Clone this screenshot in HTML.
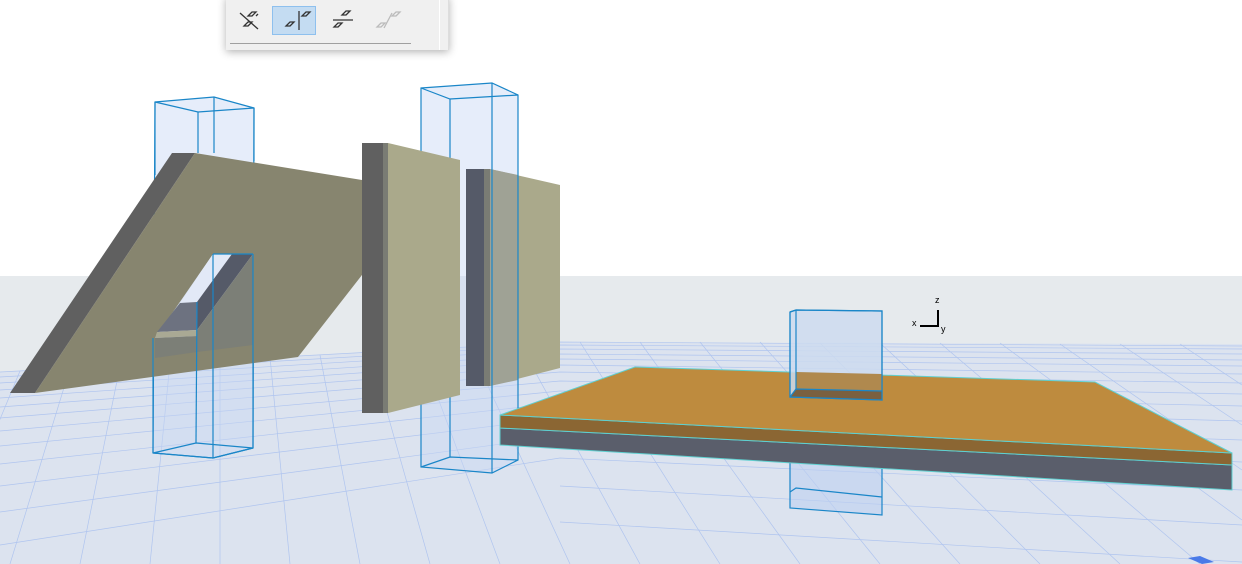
<!DOCTYPE html>
<html><head><style>
html,body{margin:0;padding:0;width:1242px;height:564px;overflow:hidden;background:#fff;font-family:"Liberation Sans",sans-serif}
</style></head><body>
<svg width="1242" height="564" viewBox="0 0 1242 564" xmlns="http://www.w3.org/2000/svg" style="position:absolute;left:0;top:0">
<rect x="0" y="0" width="1242" height="276" fill="#ffffff"/>
<rect x="0" y="276" width="1242" height="288" fill="#e6eaed"/>
<polygon points="0,372 560,342 1242,344 1242,564 0,564" fill="#dce3ef"/>
<g stroke="#9db8ef" stroke-width="0.7" fill="none" opacity="0.7">
<polyline points="0,372 560,342 1242,346"/>
<polyline points="0,377 560,345 1242,349"/>
<polyline points="0,383 560,349 1242,354"/>
<polyline points="0,390 560,354 1242,360"/>
<polyline points="0,398 560,359 1242,366"/>
<polyline points="0,407 560,365 1242,374"/>
<polyline points="0,418 560,372 1242,383"/>
<polyline points="0,431 560,381 1242,394"/>
<polyline points="0,446 560,391 1242,406"/>
<polyline points="0,464 560,403 1242,421"/>
<polyline points="0,486 560,418 1242,440"/>
<polyline points="0,512 560,436 1242,462"/>
<polyline points="0,545 560,458 1242,490"/>
<polyline points="560,486 1242,525"/>
<polyline points="560,522 1242,562"/>
<line x1="20" y1="371" x2="-60" y2="564"/>
<line x1="70" y1="368" x2="10" y2="564"/>
<line x1="120" y1="366" x2="80" y2="564"/>
<line x1="170" y1="363" x2="150" y2="564"/>
<line x1="220" y1="360" x2="220" y2="564"/>
<line x1="270" y1="357" x2="290" y2="564"/>
<line x1="320" y1="355" x2="360" y2="564"/>
<line x1="370" y1="352" x2="430" y2="564"/>
<line x1="420" y1="350" x2="500" y2="564"/>
<line x1="470" y1="347" x2="570" y2="564"/>
<line x1="520" y1="344" x2="640" y2="564"/>
<line x1="580" y1="342" x2="720" y2="564"/>
<line x1="640" y1="342" x2="800" y2="564"/>
<line x1="700" y1="342" x2="880" y2="564"/>
<line x1="760" y1="342" x2="960" y2="564"/>
<line x1="820" y1="343" x2="1040" y2="564"/>
<line x1="880" y1="343" x2="1120" y2="564"/>
<line x1="940" y1="343" x2="1200" y2="564"/>
<line x1="1000" y1="343" x2="1242" y2="520"/>
<line x1="1060" y1="344" x2="1242" y2="470"/>
<line x1="1120" y1="344" x2="1242" y2="425"/>
<line x1="1180" y1="344" x2="1242" y2="385"/>
</g>
<!-- column 1 back -->
<g stroke="#1a86c8" stroke-width="1.2" fill="rgba(200,215,245,0.45)">
<polygon points="155,102 214,97 254,108 253,448 213,458 153,453"/>
</g>
<!-- sloped wall -->
<polygon points="10,393 35,393 195,153 172,153" fill="#606060"/>
<path d="M35,393 L195,153 L362,180 L362,275 L298,357 Z M155,338 L213,254 L253,254 L253,345 Z" fill="#87856f" fill-rule="evenodd"/>
<polygon points="180,303 213,254 232,254 197,302" fill="#e2e9f7"/>
<polygon points="197,302 232,254 253,254 197,330" fill="#555a68"/>
<polygon points="180,303 197,302 197,330 157,332" fill="#6d7280"/>
<polygon points="157,332 197,330 197,336 155,338" fill="#a9a994"/>
<polygon points="197,336 197,330 253,254 253,345 197,352" fill="#7c7f77"/>
<polygon points="155,338 197,336 197,352 155,358" fill="#7c7f77"/>
<g stroke="#1a86c8" stroke-width="1.2" fill="none">
<polyline points="155,102 198,112 254,108"/>
<line x1="155" y1="102" x2="155" y2="175"/>
<line x1="198" y1="112" x2="198" y2="153"/>
<line x1="214" y1="97" x2="214" y2="153"/>
<line x1="254" y1="108" x2="254" y2="161"/>
<line x1="153" y1="338" x2="153" y2="453"/><line x1="197" y1="302" x2="196" y2="443"/><line x1="213" y1="254" x2="213" y2="458"/><line x1="253" y1="254" x2="253" y2="448"/>
<line x1="213" y1="254" x2="253" y2="254"/>
<polyline points="153,453 196,443 253,448 213,458 153,453"/>
</g>
<!-- column 2 fill -->
<polygon points="421,88 492,83 518,95 518,460 492,473 421,467" fill="rgba(200,215,245,0.45)"/>
<!-- wall 3 -->
<polygon points="466,169 487,169 487,386 466,386" fill="#555a68"/>
<polygon points="484,169 490,169 490,386 484,386" fill="#7a7c74"/>
<polygon points="490,169 560,185 560,368 490,386" fill="#aaa98b"/>
<polygon points="490,169 518,175 518,380 490,386" fill="#9fa295"/>
<!-- column 2 lines -->
<g stroke="#1a86c8" stroke-width="1.2" fill="none">
<polygon points="421,88 492,83 518,95 518,460 492,473 421,467"/>
<polyline points="421,88 450,99 518,95"/>
<line x1="450" y1="99" x2="450" y2="457"/>
<line x1="492" y1="83" x2="492" y2="473"/>
<polyline points="421,467 450,457 518,460"/>
</g>
<!-- wall 2 -->
<polygon points="362,143 386,143 386,413 362,413" fill="#606060"/>
<polygon points="383,143 388,143 388,413 383,413" fill="#7a7c74"/>
<polygon points="388,143 460,160 460,395 388,413" fill="#aaa98b"/>
<!-- small box lower -->
<g stroke="#1a86c8" stroke-width="1.2" fill="rgba(190,208,240,0.6)">
<polygon points="790,440 882,440 882,515 790,508"/>
<polyline fill="none" points="790,492 796,488 882,497"/>
</g>
<!-- slab -->
<polygon points="500,428 1232,465 1232,490 500,445" fill="#5a5e6b" stroke="#5fd0d0" stroke-width="1"/>
<polygon points="500,415 1232,453 1232,465 500,428" fill="#8b6633" stroke="#5fd0d0" stroke-width="1"/>
<polygon points="500,415 635,367 1095,382 1232,453" fill="#be8b3e" stroke="#5fd0d0" stroke-width="1"/>
<!-- small box upper -->
<g stroke="#1a86c8" stroke-width="1.2">
<polygon points="790,312 796,310 882,311 882,400 790,397" fill="rgba(205,218,238,0.85)"/>
<polygon points="796,372 882,374 882,391 796,389" fill="#b0894e" stroke="none"/>
<polygon points="796,389 882,391 882,400 790,397" fill="#7a6040" stroke="none"/>
<polyline fill="none" points="790,312 796,310 882,311 882,400 790,397 790,312"/>
<polyline fill="none" points="790,397 796,389 882,391"/>
<line x1="796" y1="310" x2="796" y2="389"/>
</g>
<!-- axis -->
<g stroke="#000" stroke-width="2" fill="none"><polyline points="920,326 938,326 938,310"/></g>
<text x="935" y="303" font-size="9" font-family="Liberation Sans">z</text>
<text x="912" y="326" font-size="9" font-family="Liberation Sans">x</text>
<text x="941" y="332" font-size="9" font-family="Liberation Sans">y</text>
<polygon points="1188,558 1200,556 1214,562 1202,564" fill="#4a7ae8"/>
</svg>
<!-- toolbar -->
<div style="position:absolute;left:226px;top:-4px;width:222px;height:54px;background:#f0f0f0;box-shadow:0 2px 8px rgba(0,0,0,0.3);border-right:1px solid #ddd">
<div style="position:absolute;left:46px;top:10px;width:42px;height:27px;background:#c4dcf2;border:1px solid #8ec0ee"></div>
<div style="position:absolute;left:4px;top:47px;width:181px;height:1px;background:#a0a0a0"></div>
<div style="position:absolute;left:213px;top:0;width:1px;height:54px;background:#fff"></div>
<svg width="222" height="54" style="position:absolute;left:0;top:0" fill="none" stroke-width="1.3">
<g stroke="#333"><line x1="14" y1="17" x2="32" y2="33"/><path d="M22,30 l4,-4 l-4,0 l-4,4 z M26,20 l4,-4 l-4,0 l-4,4 z M20,28 l-2,2 M32,18 l-2,2"/></g>
<g stroke="#333"><line x1="73" y1="15" x2="73" y2="34"/><path d="M64,30 l4,-4 l-4,0 l-4,4 z M80,20 l4,-4 l-4,0 l-4,4 z"/></g>
<g stroke="#333"><line x1="107" y1="24" x2="127" y2="24"/><path d="M112,31 l4,-4 l-4,0 l-4,4 z M120,19 l4,-4 l-4,0 l-4,4 z"/></g>
<g stroke="#bbb"><line x1="158" y1="32" x2="166" y2="17"/><path d="M155,31 l4,-4 l-4,0 l-4,4 z M170,20 l4,-4 l-4,0 l-4,4 z"/></g>
</svg>
</div>
</body></html>
